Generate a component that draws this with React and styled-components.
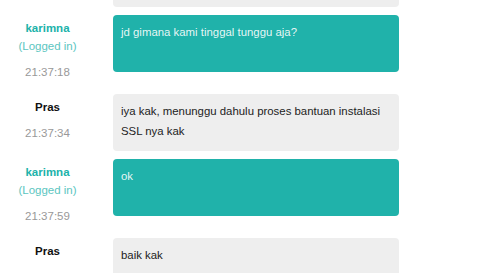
import React from "react";
import styled, { createGlobalStyle } from "styled-components";

const GlobalStyle = createGlobalStyle`
  html, body {
    margin: 0;
    padding: 0;
    background: #fff;
    overflow: hidden;
  }
  body {
    font-family: "Liberation Sans", Arial, sans-serif;
  }
`;

const ChatList = styled.div`
  display: flex;
  flex-direction: column;
  gap: 8px;
  margin-top: -50px;
`;

const Row = styled.div`
  display: flex;
  align-items: flex-start;
  gap: 18px;
`;

const Sender = styled.div`
  width: 95px;
  flex-shrink: 0;
  padding: 4px 0 5px;
  text-align: center;
  font-size: 11.5px;
  line-height: 18px;
`;

const Name = styled.div`
  font-weight: bold;
  color: ${(p) => (p.$me ? "#20b2aa" : "#111")};
`;

const Status = styled.div`
  color: #5cc6bf;
`;

const Time = styled.div`
  margin-top: 8px;
  color: #999;
`;

const Bubble = styled.div`
  width: 286px;
  box-sizing: border-box;
  min-height: 57px;
  padding: 8px 8px;
  border-radius: 4px;
  font-size: 11.4px;
  line-height: 19.5px;
  background: ${(p) => (p.$me ? "#20b2aa" : "#eeeeee")};
  color: ${(p) => (p.$me ? "rgba(255,255,255,0.9)" : "#222")};
`;

const messages = [
  { me: false, name: "Pras", time: "21:37:02", text: "baik kak, mohon ditunggu" },
  { me: true, name: "karimna", time: "21:37:18", text: "jd gimana kami tinggal tunggu aja?" },
  { me: false, name: "Pras", time: "21:37:34", text: "iya kak, menunggu dahulu proses bantuan instalasi SSL nya kak" },
  { me: true, name: "karimna", time: "21:37:59", text: "ok" },
  { me: false, name: "Pras", time: "21:38:10", text: "baik kak" },
];

export default function App() {
  return (
    <>
      <GlobalStyle />
      <ChatList>
        {messages.map((m, i) => (
          <Row key={i}>
            <Sender>
              <Name $me={m.me}>{m.name}</Name>
              {m.me && <Status>(Logged in)</Status>}
              <Time>{m.time}</Time>
            </Sender>
            <Bubble $me={m.me}>{m.text}</Bubble>
          </Row>
        ))}
      </ChatList>
    </>
  );
}
